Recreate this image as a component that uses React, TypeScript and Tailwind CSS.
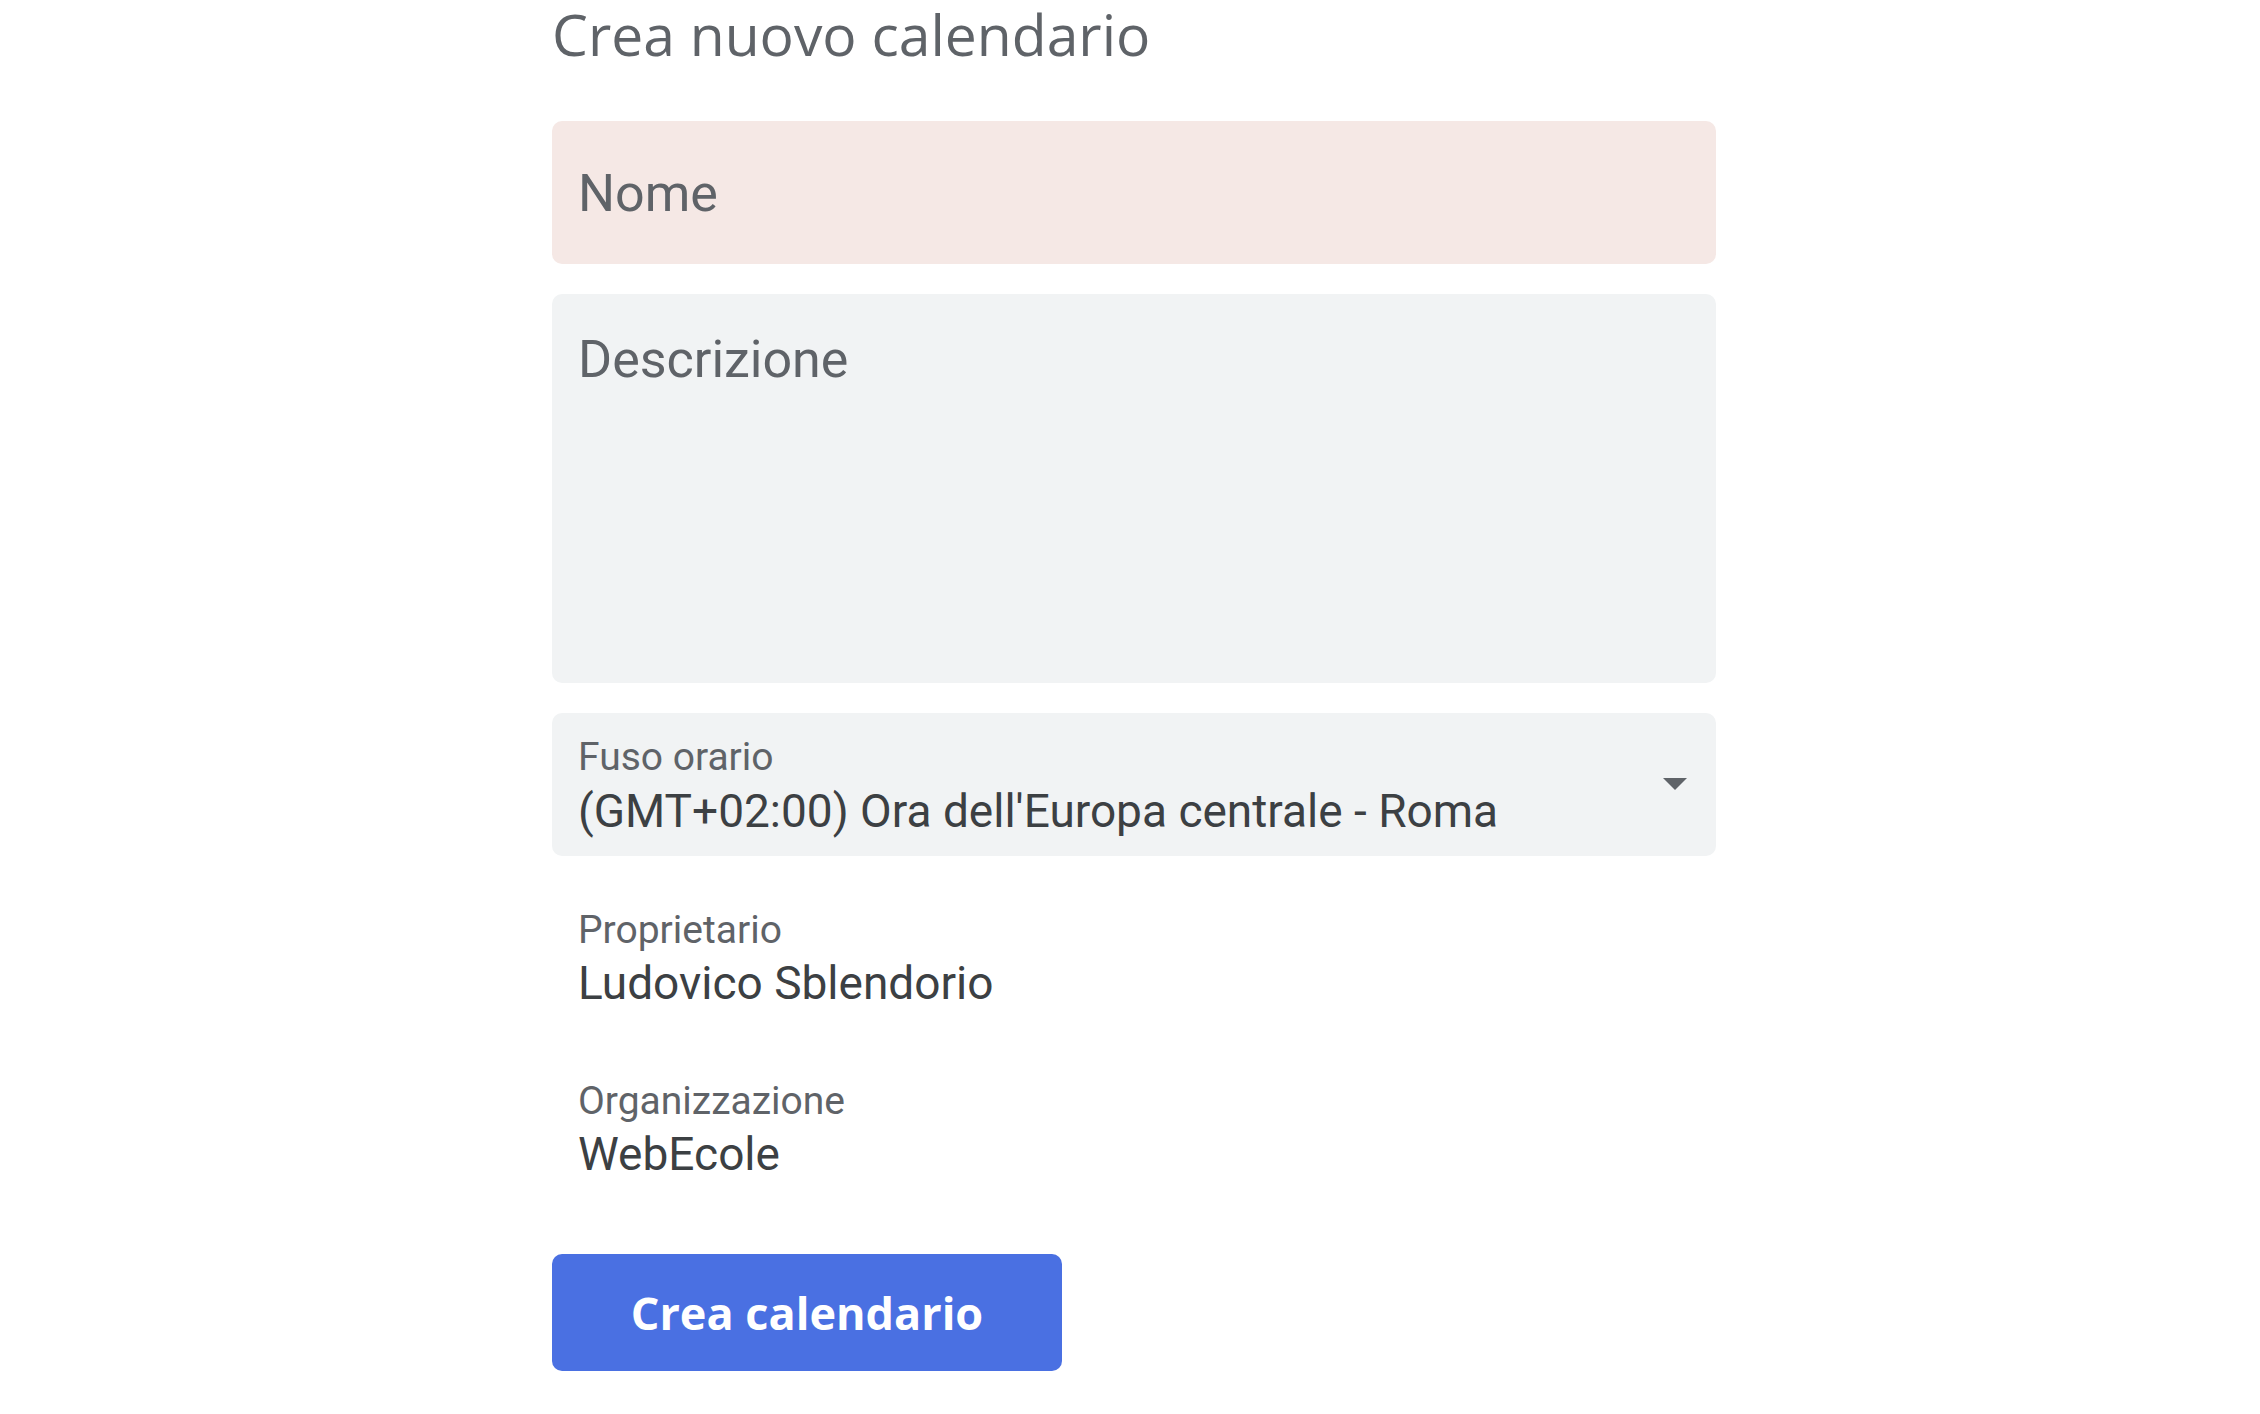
export default function App() {
    return (
        <div className="min-h-[1414px] w-full bg-white">
            <div className="ml-[552px] flex w-[1164px] flex-col pt-[6px]" style={{ fontFamily: 'Roboto, "Liberation Sans", sans-serif' }}>
                {/* Titolo */}
                <h1 className="text-[57px] leading-[57px] text-[#5f6368]" style={{ fontFamily: '"Open Sans", Roboto, sans-serif' }}>
                    Crea nuovo calendario
                </h1>

                {/* Nome */}
                <div className="mt-[58px] flex h-[143px] items-center rounded-[10px] bg-[#f5e8e5] px-[26px]">
                    <span className="mt-[2px] text-[52px] leading-[62px] text-[#5f6368]">Nome</span>
                </div>

                {/* Descrizione */}
                <div className="mt-[30px] h-[389px] rounded-[10px] bg-[#f1f3f4] px-[26px] pt-[35px]">
                    <span className="text-[52px] leading-[62px] text-[#5f6368]">Descrizione</span>
                </div>

                {/* Fuso orario */}
                <div className="mt-[30px] flex h-[143px] items-center justify-between rounded-[10px] bg-[#f1f3f4] pl-[26px] pr-[29px]">
                    <div className="mt-[3px] flex flex-col">
                        <span className="text-[39px] leading-[45px] text-[#5f6368]">Fuso orario</span>
                        <span className="mt-[5px] text-[46px] leading-[53px] text-[#3c4043]">(GMT+02:00) Ora dell'Europa centrale - Roma</span>
                    </div>
                    <svg width="24" height="12" viewBox="0 0 24 12" className="mt-[-2px]">
                        <path d="M0 0 L24 0 L12 12 Z" fill="#5f6368" />
                    </svg>
                </div>

                {/* Proprietario */}
                <div className="mt-[52px] flex flex-col px-[26px]">
                    <span className="text-[39px] leading-[45px] text-[#5f6368]">Proprietario</span>
                    <span className="mt-[4px] text-[46px] leading-[53px] text-[#3c4043]">Ludovico Sblendorio</span>
                </div>

                {/* Organizzazione */}
                <div className="mt-[69px] flex flex-col px-[26px]">
                    <span className="text-[39px] leading-[45px] text-[#5f6368]">Organizzazione</span>
                    <span className="mt-[4px] text-[46px] leading-[53px] text-[#3c4043]">WebEcole</span>
                </div>

                <button
                    className="mt-[73px] flex h-[117px] w-[510px] items-center justify-center rounded-[10px] bg-[#4a70e2] text-[45px] font-bold text-white"
                    style={{ fontFamily: '"Open Sans", Roboto, sans-serif' }}
                >
                    Crea calendario
                </button>
            </div>
        </div>
    );
}
